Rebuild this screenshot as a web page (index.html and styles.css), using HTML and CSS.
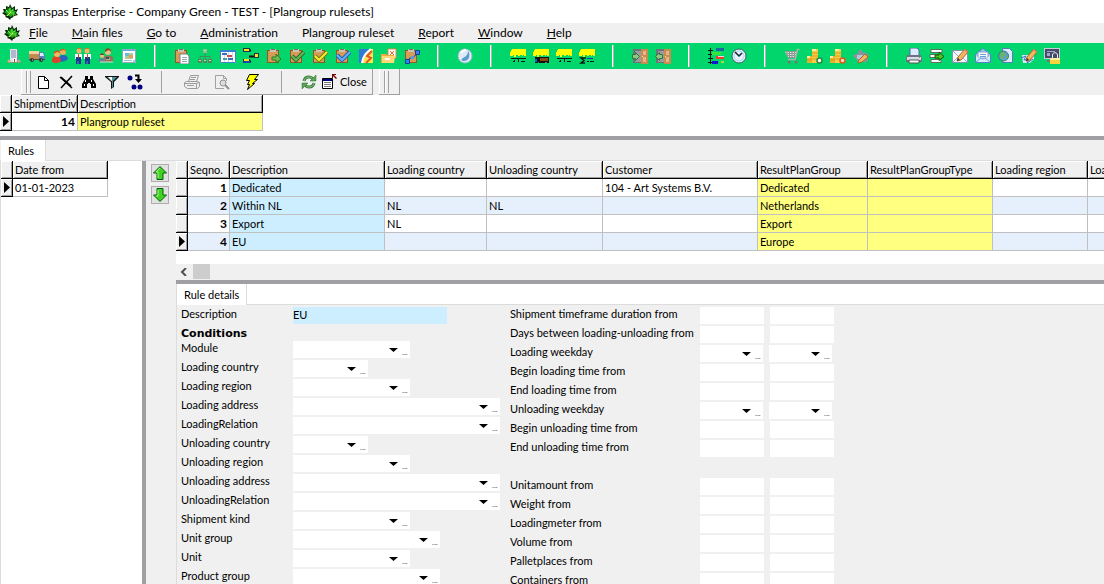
FILE: index.html
```html
<!DOCTYPE html>
<html lang="en">
<head>
    <meta charset="UTF-8">
    <meta name="viewport" content="width=device-width, initial-scale=1.0">
    <title>Transpas Enterprise - Plangroup rulesets</title>
    <link rel="stylesheet" href="styles.css">
</head>
<body>

    <!-- Icon shapes -->
    <svg class="sprite" aria-hidden="true">
        <symbol id="leaf" viewBox="0 0 16 16">
            <path d="M8 0l2 4 3-2v4l3-1-2 4 2 2-4 1-2 2H9l-1 2-2-2-3-1 1-1-4-3 2-1-1-3h3L4 2l3 1z" fill="#062a06"/>
            <path d="M8 2l1 4 3-2v3l2 0-1 2 1 2-3 0-2 2-2-1-3 0 1-2-3-2 2-1-1-2 3 1-1-3 2 2z" fill="#1fa81f"/>
            <path d="M8 4v4l3-2M4 6l3 3 5 0" stroke="#6af046" fill="none"/>
            <path d="M5 12l3-3 1-1M11 11h1" stroke="#e2e83a" fill="none"/>
        </symbol>
        <symbol id="building" viewBox="0 0 16 16">
            <path d="M1 14h14v1H1z" fill="#7c9a62"/><path d="M4 1h7v13H4z" fill="#dfe2ea"/><path d="M11 2h1v12h-1z" fill="#8890a8"/>
            <path d="M5 3h5M5 5h5M5 7h5M5 9h5" stroke="#7d90b4"/>
            <path d="M7 10h3v4H7z" fill="#fff"/><path d="M8 11h1v3H8z" fill="#99463a"/><circle cx="3" cy="13" r="1.500" fill="#c8b48e"/><circle cx="13" cy="13" r="1.500" fill="#c8a48e"/>
        </symbol>
        <symbol id="truck" viewBox="0 0 16 16">
            <path d="M0 3h10v8H0z" fill="#c08a50"/><path d="M0 3h10v3H0z" fill="#f0d29a"/><path d="M10 4h4l2 4v4h-6z" fill="#5b83bb"/><path d="M11 5h3l1 3h-4z" fill="#dcecff"/>
            <path d="M0 11h16v1H0z" fill="#4a4a52"/><circle cx="3" cy="12" r="2" fill="#333"/><circle cx="12" cy="12" r="2" fill="#333"/><path d="M3 12h1M12 12h1" stroke="#ccc"/>
        </symbol>
        <symbol id="people" viewBox="0 0 16 16">
            <path d="M7 14c0-5 1-7 4-7s5 2 5 4c-2 2-5 3-9 3z" fill="#2a62c4"/><circle cx="11" cy="4" r="3" fill="#f0b060"/><path d="M8 3c0-3 6-3 6 1l-2-2z" fill="#c06820"/>
            <path d="M0 14c0-4 1-6 4-6s5 2 5 5c-2 2-6 3-9 1z" fill="#e04428"/><circle cx="5" cy="6" r="3" fill="#f7b868"/><path d="M2 6c-1-4 6-5 6-1L5 4z" fill="#d8501c"/>
        </symbol>
        <symbol id="pair" viewBox="0 0 16 16">
            <circle cx="4" cy="3" r="2.500" fill="#f3b36a"/><circle cx="12" cy="3" r="2.500" fill="#f3b36a"/><path d="M2 0h4v1H2zM10 0h4v1h-4z" fill="#e0702c"/>
            <path d="M0 6h7v5H0zM9 6h7v5H9z" fill="#fff"/><path d="M1 9h5v7H1zM10 9h5v7h-5z" fill="#183a8c"/><path d="M3.500 6v4M12.500 6v4" stroke="#e03a2a"/><path d="M3 13v3M12 13v3" stroke="#5c88d8"/>
        </symbol>
        <symbol id="family" viewBox="0 0 16 16">
            <circle cx="10" cy="4" r="3" fill="#f0bd84"/><path d="M7 4c-1-5 7-5 6 0l-2-2z" fill="#8b4a20"/><path d="M6 14V9c1-2 7-2 9 0v5z" fill="#96744f"/>
            <circle cx="4" cy="8" r="2" fill="#f0bd84"/><path d="M2 7c0-2 4-2 4 0z" fill="#7a3d1c"/><path d="M1 14v-3c1-1 5-1 6 0v3z" fill="#6c8194"/><path d="M8 11h4M2 14h13" stroke="#ddd"/><path d="M8 9h3v2H8z" fill="#334e76"/>
        </symbol>
        <symbol id="calendar" viewBox="0 0 16 16">
            <path d="M1 1h14v14H1z" fill="#fff"/><path d="M1 1h14v2H1z" fill="#6ca4e4"/><path d="M1.500 1.500h13v13h-13z" fill="none" stroke="#8aa7c6"/>
            <path d="M4 5h8v6H4z" fill="#a9cf9d"/><path d="M4 5h4v3H4z" fill="#6cb8d8"/><path d="M8 7h4v3H8z" fill="#ef9a52"/><path d="M3 12.500h8" stroke="#9fb8d4"/><path d="M12 12h2v2h-2z" fill="#b8c4d0"/>
        </symbol>
        <symbol id="clip" viewBox="0 0 16 16">
            <path d="M1 2h12v13H1z" fill="#8c5a24"/><path d="M2 3h10v11H2z" fill="#d79b56"/><path d="M4 1h6v3H4z" fill="#c8c4b8"/><path d="M5 1h4v1H5z" fill="#77705f"/>
        </symbol>
        <symbol id="clip-page" viewBox="0 0 16 16">
            <use href="#clip"/><path d="M6 6h7l2 2v8H6z" fill="#fff" stroke="#7a7f8c"/><path d="M8 9.500h5M8 11.500h5M8 13.500h5" stroke="#9aa4b4"/>
        </symbol>
        <symbol id="tree" viewBox="0 0 16 16">
            <path d="M8 5v4M3 12V8.500h10V12M8 9v3" fill="none" stroke="#4a8a58"/><path d="M6 1h4v4H6z" fill="#8ec08e"/><path d="M1 11h4v4H1zM6 11h4v4H6zM11 11h4v4h-4z" fill="#508a5c"/><path d="M7 2h2v1H7zM2 12h2v1H2zM7 12h2v1H7zM12 12h2v1h-2z" fill="#b9dfb8"/>
        </symbol>
        <symbol id="gantt" viewBox="0 0 16 16">
            <path d="M0 2h16v13H0z" fill="#fff"/><path d="M0 2h16v2H0z" fill="#2e7ed2"/><path d="M.5 2.500h15v12H.5z" fill="none" stroke="#3f82c8"/><path d="M4.500 4v10M8.500 4v10M12.500 4v10" stroke="#cbdcec"/>
            <path d="M2 5h5v2H2zM8 10h5v2H8z" fill="#3d6bb8"/><path d="M7 7h5v2H7z" fill="#d14b4b"/><path d="M3 10h4v2H3z" fill="#46a0a0"/>
        </symbol>
        <symbol id="links" viewBox="0 0 16 16">
            <path d="M7 2.500h1M7 13.500h1M6 8.500h5" fill="none" stroke="#111" stroke-width="2"/><path d="M0 0h7v4H0zM0 11h7v4H0zM11 5h5v5h-5z" fill="#26324c"/><path d="M1 1h5v2H1zM12 6h3v3h-3z" fill="#ffe21a"/><path d="M1 11h5v2H1z" fill="#ffe21a"/><path d="M1 13h6v2H1z" fill="#1846b4"/>
        </symbol>
        <symbol id="clip-go" viewBox="0 0 16 16">
            <use href="#clip"/><path d="M6 9h4V6l5 5-5 4v-3H6z" fill="#6dbb4d" stroke="#2b7a2b"/>
        </symbol>
        <symbol id="clip-green" viewBox="0 0 16 16">
            <use href="#clip"/><path d="M3 8l4 4 8-8" fill="none" stroke="#226b2a" stroke-width="4"/><path d="M3 8l4 4 8-8" fill="none" stroke="#63b857" stroke-width="2"/>
        </symbol>
        <symbol id="clip-yellow" viewBox="0 0 16 16">
            <use href="#clip"/><path d="M3 8l4 4 8-8" fill="none" stroke="#6d7a12" stroke-width="4"/><path d="M3 8l4 4 8-8" fill="none" stroke="#f5ee2a" stroke-width="2"/>
        </symbol>
        <symbol id="clip-blue" viewBox="0 0 16 16">
            <use href="#clip"/><path d="M2 7l5 5 8-8" fill="none" stroke="#2161b8" stroke-width="4"/><path d="M2 7l5 5 8-8" fill="none" stroke="#62b0f5" stroke-width="2"/>
        </symbol>
        <symbol id="map" viewBox="0 0 16 16">
            <path d="M1 1h14v14H1z" fill="#ffe44c"/><path d="M1 1h11C6 4 8 11 3 15H1z" fill="#2f79d8"/><path d="M4 15C5 8 8 5 13 1" fill="none" stroke="#fff" stroke-width="2"/><path d="M14 3l-5 5 4 2-5 5" fill="none" stroke="#e2572a" stroke-width="2"/>
        </symbol>
        <symbol id="folder" viewBox="0 0 16 16">
            <path d="M7 1h8v9H7z" fill="#fff" stroke="#e8854a"/><path d="M9 3l4 4M13 3L9 7" stroke="#ea6a2a"/><path d="M0 6h5l1 1h7v8H0z" fill="#f1a93b"/><path d="M1 8h13l-1 7H1z" fill="#ffd877"/><path d="M4 10h5v2H4z" fill="#fff"/>
        </symbol>
        <symbol id="clip-nodes" viewBox="0 0 16 16">
            <use href="#clip"/><path d="M4 13c0-5 7-1 9-9" fill="none" stroke="#143b8c"/><path d="M1.500 11.500h4v4h-4zM11.500 2.500h4v4h-4z" fill="#2f86f0" stroke="#123f96"/><path d="M7 8h3v3H7z" fill="#4f9bf4"/>
        </symbol>
        <symbol id="globe" viewBox="0 0 16 16">
            <circle cx="8" cy="8" r="7" fill="#dcebf4" stroke="#9bb9cf"/><path d="M11 3c3 4 1 10-4 10-3 0-3-2-1-3s5-3 5-7z" fill="#5b9bd0"/><path d="M4 5c1-2 3-3 5-3" stroke="#fff" stroke-width="2" fill="none"/>
        </symbol>
        <symbol id="trailer" viewBox="0 0 16 16">
            <path d="M2 1h14v7h-2V7h-1v1h-1V7h-2v1H8V7H6v2H4V7H3v1H0V4h1V2h1z" fill="#ffff00"/>
        </symbol>
        <symbol id="trailer-a" viewBox="0 0 16 16">
            <use href="#trailer"/><path d="M1 10h15v1H1zM4 12h1v2H4zM8 11h1v3H8zM3 13h2v1H3zM11 13h4v1h-4z" fill="#041c0e"/>
        </symbol>
        <symbol id="trailer-b" viewBox="0 0 16 16">
            <use href="#trailer"/><path d="M2 9h14v6H2z" fill="#111"/><path d="M7 10h8v3H7z" fill="#8b4a0e"/><path d="M2 11h2v3H2z" fill="#1860c8"/><path d="M5 14h1v1H5zM12 14h2v1h-2z" fill="#777"/>
        </symbol>
        <symbol id="trailer-c" viewBox="0 0 16 16">
            <use href="#trailer"/><path d="M7 10H2l3 2.500L2 15h4" fill="none" stroke="#041c0e" stroke-width="1.500"/><path d="M8 10h6v1H8z" fill="#0a38b0"/><path d="M8 13h2v1H8zM11 13h4v1h-4z" fill="#041c0e"/>
        </symbol>
        <symbol id="door" viewBox="0 0 16 16">
            <path d="M1 1h14v14H1z" fill="#6e7278"/><path d="M3 3h6v11H3z" fill="#999da0"/><path d="M9 1h7v15H9z" fill="#c98b50"/><path d="M11 3h3v4h-3zM11 9h3v5h-3z" fill="#e6b784"/><path d="M10 8h1v1h-1z" fill="#ffe98c"/>
        </symbol>
        <symbol id="door-in" viewBox="0 0 16 16">
            <use href="#door"/><path d="M.5 6.500h3v-2l4 4-4 4v-2h-3z" fill="#8cc87c" stroke="#387044"/>
        </symbol>
        <symbol id="door-out" viewBox="0 0 16 16">
            <use href="#door"/><path d="M7.500 6.500h-3v-2l-4 4 4 4v-2h3z" fill="#8cc87c" stroke="#387044"/>
        </symbol>
        <symbol id="bars" viewBox="0 0 16 16">
            <path d="M2 0h1v16H2zM0 2h5v1H0zM0 6h5v1H0zM0 10h5v1H0zM0 14h5v1H0z" fill="#081c10"/><path d="M8 0h8v3H8z" fill="#166a9c"/><path d="M4 4h9v3H4z" fill="#36e43c"/><path d="M8 8h8v3H8z" fill="#f43a34"/><path d="M10 8h6v1h-6z" fill="#ffd5d0"/><path d="M4 13h6v3H4z" fill="#1018d0"/><path d="M13 13h3v2h-3z" fill="#a4e02e"/>
        </symbol>
        <symbol id="clock" viewBox="0 0 16 16">
            <circle cx="8" cy="8" r="7" fill="#e7f4fb" stroke="#46606e"/><circle cx="8" cy="8" r="5" fill="none" stroke="#a5d6f2"/><path d="M4 4l4 4 3-3" stroke="#10242e" stroke-width="1.500" fill="none"/>
        </symbol>
        <symbol id="cart" viewBox="0 0 16 16">
            <path d="M1 4h12l-2 5H4z" fill="#e0e4e0"/><path d="M1 3.500h11.500M2 5.500h10M3 7.500h9M4 9.500h7M3 3v6M5.500 4v6M8 4v6M10.500 4v5" stroke="#8b9690" fill="none"/><path d="M15.500 1.500h-2L11 11.500H4" stroke="#b0b4b0" stroke-width="1.500" fill="none"/><circle cx="5" cy="14" r="1.500" fill="#777"/><circle cx="12" cy="14" r="1.500" fill="#777"/>
        </symbol>
        <symbol id="coins" viewBox="0 0 16 16">
            <path d="M0 8h5v7H0z" fill="#e6b42c"/><path d="M5 1h6v14H5z" fill="#f6cd46"/><path d="M5 1h4v2H5zM0 8h3v2H0z" fill="#fff0a0"/><path d="M5 5h6M5 8h6M5 11h6M0 12h5" stroke="#d49a1c"/>
        </symbol>
        <symbol id="coins-add" viewBox="0 0 16 16">
            <use href="#coins"/><circle cx="12.500" cy="12.500" r="2.500" fill="#fff" stroke="#2c8a3a" stroke-width="1.500"/>
        </symbol>
        <symbol id="coins-del" viewBox="0 0 16 16">
            <use href="#coins"/><circle cx="12.500" cy="12.500" r="2.500" fill="#ffd8b8" stroke="#e05a1c" stroke-width="1.500"/>
        </symbol>
        <symbol id="pencil" viewBox="0 0 16 16">
            <path d="M5 13l1-4 7-8 3 3-7 8z" fill="#f4b661" stroke="#a86a2a"/><path d="M5 13l1-3 2 2z" fill="#333"/><path d="M12 2l1-1 3 3-1 1z" fill="#e58a6a"/>
        </symbol>
        <symbol id="edit-gear" viewBox="0 0 16 16">
            <path d="M6 2h3v2l4 1 3 2-1 2-1 5H5l-2-3-3-3V7l4-1z" fill="#8795a0"/><path d="M4 7h6v4H4z" fill="#b9c7d0"/><path d="M5 15l1-3 6-6 3 3-6 5z" fill="#f4b661" stroke="#a86a2a"/>
        </symbol>
        <symbol id="printer" viewBox="0 0 16 16">
            <path d="M4 0h7l2 2v6H4z" fill="#dcebff" stroke="#4d6c9c"/><path d="M1 7h14l1 3v4H0v-4z" fill="#6d7384"/><path d="M1 9h14v3H1z" fill="#d8dce4"/><path d="M3 12h10v3H3z" fill="#fff" stroke="#555"/><path d="M13 9h1v1h-1z" fill="#3cc43c"/>
        </symbol>
        <symbol id="export" viewBox="0 0 16 16">
            <path d="M2 1.500h11v3H2zM1 6.500h11v3H1zM2 11.500h10v3H2z" fill="#fff" stroke="#57705e"/><path d="M6 7h4V4l5 4.500-5 4V10H6z" fill="#49c51c" stroke="#17510f"/>
        </symbol>
        <symbol id="mail-edit" viewBox="0 0 16 16">
            <path d="M.5 2.500h15v12H.5z" fill="#f4f8ff" stroke="#7d94b8"/><path d="M1 3l6 6 8-6M1 14l5-5M15 14l-5-5" stroke="#93abcc" fill="none"/><use href="#pencil"/>
        </symbol>
        <symbol id="mail-open" viewBox="0 0 16 16">
            <path d="M.5 6.500L8 .5l7.500 6v8H.5z" fill="#a4ccf4" stroke="#4d84c8"/><path d="M3 4h10v6H3z" fill="#fff" stroke="#7e9cc6"/><path d="M5 6.500h6M5 8.500h6" stroke="#65a0dc"/><path d="M1 8l7 4 7-4v6H1z" fill="#d9ebff"/><path d="M1 14l5-4M15 14l-5-4" stroke="#6d9fd6"/>
        </symbol>
        <symbol id="web-page" viewBox="0 0 16 16">
            <path d="M4.500.5h7l3 3v11h-10z" fill="#dcebff" stroke="#4f7dbc"/><circle cx="5.500" cy="8" r="5" fill="#5f9fce" stroke="#3a7a72"/><path d="M2 5l4-1 2 3-3 2 1 3-3-2zM8 8l2 1-2 2z" fill="#68b85a"/>
        </symbol>
        <symbol id="sign" viewBox="0 0 16 16">
            <path d="M1 7h12v4l-4 4H2z" fill="#d8e8fb"/><path d="M0 10l5-2-2 4 5-1-2 4 6-4" fill="none" stroke="#3f78bd"/><use href="#pencil"/>
        </symbol>
        <symbol id="lock-screen" viewBox="0 0 16 16">
            <path d="M0 0h16v11H0z" fill="#c9ccd6"/><path d="M1 1h14v9H1z" fill="#454a68"/><path d="M3 3h8v1H3zM3 5h3v3H3z" fill="#a0a8c8"/><path d="M3 12h4v2H3z" fill="#737784"/><path d="M8.500 11V7c0-3 5-3 5 0v4" fill="none" stroke="#eee"/><path d="M6 10h10v6H6z" fill="#f8d43c"/><path d="M6 10h10v2H6z" fill="#fff0a0"/>
        </symbol>
        <symbol id="new" viewBox="0 0 16 16">
            <path d="M3.500 2.500h6l4 4v8h-10z" fill="#fff" stroke="#000"/><path d="M9.500 2.500v4h4" fill="none" stroke="#000"/>
        </symbol>
        <symbol id="delete" viewBox="0 0 16 16">
            <path d="M2 3l12 11M14 2L3 14M3 3l10 9" stroke="#000" stroke-width="1.500" fill="none"/>
        </symbol>
        <symbol id="find" viewBox="0 0 16 16">
            <path d="M4 2h3v3h2V2h3v3l3 5v4h-5v-4H9V9H7v1H6v4H1v-4l3-5z" fill="#000"/><path d="M4.500 6v2M3.500 10v2M10.500 6v2M12.500 10v2" stroke="#fff"/>
        </symbol>
        <symbol id="filter" viewBox="0 0 16 16">
            <path d="M1 2h14v1l-5 5v5l-3 2V8L1 3z" fill="#111"/><path d="M3 3h10l-4 4v6l-1 1V7H7z" fill="#4d9494"/><path d="M4 3h4v4z" fill="#fff"/>
        </symbol>
        <symbol id="goto" viewBox="0 0 16 16">
            <circle cx="3" cy="4" r="2.500" fill="#000080"/><circle cx="7" cy="13" r="2.500" fill="#000080"/><circle cx="13" cy="13" r="2.500" fill="#000080"/><path d="M8 1.500h3.500V6" fill="none" stroke="#000" stroke-width="2"/><path d="M8 5h7l-3.500 4z" fill="#000"/>
        </symbol>
        <symbol id="print-off" viewBox="0 0 16 16">
            <path d="M4.500 7.500l2-6h8l-2 6M7 3.500h5M6 5.500h5M.5 8.500l2-1h11l2 1v4l-2 2h-10l-3-2zM1 9.500h11l3-1M12.500 9.500v5M3 11.500h7" fill="none" stroke="#9b9b9b"/>
        </symbol>
        <symbol id="preview-off" viewBox="0 0 16 16">
            <path d="M10 14.500H1.500v-13h8l3 3V7M9.500 1.500v3h3" fill="none" stroke="#a0a0a0"/><circle cx="9" cy="9" r="3" fill="#ddd" stroke="#909090"/><path d="M11 11l4 4" stroke="#909090" stroke-width="2"/>
        </symbol>
        <symbol id="bolt" viewBox="0 0 16 16">
            <path d="M5.500.5h9l-4 5h3l-5 4h2l-7 6 2-5h-2l2-4h-3z" fill="#ffff00" stroke="#000"/>
        </symbol>
        <symbol id="refresh" viewBox="0 0 16 16">
            <path d="M3 7c1-5 7-5 9-2M13 9c-1 5-7 5-9 2" fill="none" stroke="#3c7f40" stroke-width="3"/><path d="M3 7c1-5 7-5 9-2M13 9c-1 5-7 5-9 2" fill="none" stroke="#8bcb7c"/><path d="M9 7h6V1zM7 9H1v6z" fill="#5aa653" stroke="#2f6e36" stroke-width=".5"/>
        </symbol>
        <symbol id="close-form" viewBox="0 0 16 16">
            <path d="M1.500 4.500h10v10h-10z" fill="#fff" stroke="#000"/><path d="M2 5h9v2H2z" fill="#000080"/><path d="M3 8.500h7M3 10.500h7M3 12.500h7" stroke="#777"/><path d="M11 0h4v1h-2l3 3-1 1-3-3v2h-1z" fill="#800000"/>
        </symbol>
        <symbol id="arrow-up" viewBox="0 0 16 16">
            <path d="M8 1.500L14.500 8H11v6.500H5V8H1.500z" fill="#3cd41c" stroke="#0a5a14"/><path d="M8 3L4 7h2v6" fill="none" stroke="#a8f58a"/>
        </symbol>
        <symbol id="arrow-down" viewBox="0 0 16 16">
            <path d="M8 14.500L14.500 8H11V1.500H5V8H1.500z" fill="#3cd41c" stroke="#0a5a14"/><path d="M4 9h2V3" fill="none" stroke="#a8f58a"/>
        </symbol>
    </svg>

    <header class="titlebar">
        <svg class="icon"><use href="#leaf"/></svg>
        <span>Transpas Enterprise - Company Green - TEST - [Plangroup rulesets]</span>
    </header>

    <nav class="menubar">
        <svg class="icon"><use href="#leaf"/></svg>
        <a href="#"><u>F</u>ile</a>
        <a href="#"><u>M</u>ain files</a>
        <a href="#"><u>G</u>o to</a>
        <a href="#"><u>A</u>dministration</a>
        <a href="#">Plangroup ruleset</a>
        <a href="#"><u>R</u>eport</a>
        <a href="#"><u>W</u>indow</a>
        <a href="#"><u>H</u>elp</a>
    </nav>

    <div class="mainbar">
        <button aria-label="Company"><svg class="icon"><use href="#building"/></svg></button>
        <button aria-label="Trucks"><svg class="icon"><use href="#truck"/></svg></button>
        <button aria-label="Relations"><svg class="icon"><use href="#people"/></svg></button>
        <button aria-label="Drivers"><svg class="icon"><use href="#pair"/></svg></button>
        <button aria-label="Employees"><svg class="icon"><use href="#family"/></svg></button>
        <button aria-label="Calendar"><svg class="icon"><use href="#calendar"/></svg></button>
        <span class="sep"></span>
        <button aria-label="Orders"><svg class="icon"><use href="#clip-page"/></svg></button>
        <button aria-label="Structure"><svg class="icon"><use href="#tree"/></svg></button>
        <button aria-label="Planboard"><svg class="icon"><use href="#gantt"/></svg></button>
        <button aria-label="Combine"><svg class="icon"><use href="#links"/></svg></button>
        <button aria-label="Send order"><svg class="icon"><use href="#clip-go"/></svg></button>
        <button aria-label="Approve"><svg class="icon"><use href="#clip-green"/></svg></button>
        <button aria-label="Check"><svg class="icon"><use href="#clip-yellow"/></svg></button>
        <button aria-label="Complete"><svg class="icon"><use href="#clip-blue"/></svg></button>
        <button aria-label="Map"><svg class="icon"><use href="#map"/></svg></button>
        <button aria-label="Documents"><svg class="icon"><use href="#folder"/></svg></button>
        <button aria-label="Route"><svg class="icon"><use href="#clip-nodes"/></svg></button>
        <span class="sep"></span>
        <button aria-label="Web"><svg class="icon"><use href="#globe"/></svg></button>
        <span class="sep"></span>
        <button aria-label="Trailers"><svg class="icon"><use href="#trailer-a"/></svg></button>
        <button aria-label="Loaded trailers"><svg class="icon"><use href="#trailer-b"/></svg></button>
        <button aria-label="Empty trailers"><svg class="icon"><use href="#trailer-a"/></svg></button>
        <button aria-label="Trailer totals"><svg class="icon"><use href="#trailer-c"/></svg></button>
        <span class="sep"></span>
        <button aria-label="Check in"><svg class="icon"><use href="#door-in"/></svg></button>
        <button aria-label="Check out"><svg class="icon"><use href="#door-out"/></svg></button>
        <span class="sep"></span>
        <button aria-label="Timeline"><svg class="icon"><use href="#bars"/></svg></button>
        <button aria-label="Hours"><svg class="icon"><use href="#clock"/></svg></button>
        <span class="sep"></span>
        <button aria-label="Purchase"><svg class="icon"><use href="#cart"/></svg></button>
        <button aria-label="Add cost"><svg class="icon"><use href="#coins-add"/></svg></button>
        <button aria-label="Remove cost"><svg class="icon"><use href="#coins-del"/></svg></button>
        <button aria-label="Edit settings"><svg class="icon"><use href="#edit-gear"/></svg></button>
        <span class="sep"></span>
        <button aria-label="Print"><svg class="icon"><use href="#printer"/></svg></button>
        <button aria-label="Export"><svg class="icon"><use href="#export"/></svg></button>
        <button aria-label="Write mail"><svg class="icon"><use href="#mail-edit"/></svg></button>
        <button aria-label="Mail"><svg class="icon"><use href="#mail-open"/></svg></button>
        <button aria-label="Web page"><svg class="icon"><use href="#web-page"/></svg></button>
        <button aria-label="Sign"><svg class="icon"><use href="#sign"/></svg></button>
        <button aria-label="Lock screen"><svg class="icon"><use href="#lock-screen"/></svg></button>
    </div>

    <div class="subbar">
        <div class="band">
            <span class="grip"></span>
            <div class="tools">
                <button aria-label="New"><svg class="icon"><use href="#new"/></svg></button>
                <button aria-label="Delete"><svg class="icon"><use href="#delete"/></svg></button>
                <button aria-label="Find"><svg class="icon"><use href="#find"/></svg></button>
                <button aria-label="Filter"><svg class="icon"><use href="#filter"/></svg></button>
                <button aria-label="Go to record"><svg class="icon"><use href="#goto"/></svg></button>
            </div>
            <span class="line"></span>
            <div class="tools wide">
                <button aria-label="Print list" disabled><svg class="icon"><use href="#print-off"/></svg></button>
                <button aria-label="Preview" disabled><svg class="icon"><use href="#preview-off"/></svg></button>
                <button aria-label="Actions"><svg class="icon"><use href="#bolt"/></svg></button>
            </div>
            <span class="line"></span>
            <div class="tools tight">
                <button aria-label="Refresh"><svg class="icon"><use href="#refresh"/></svg></button>
                <button class="close"><svg class="icon"><use href="#close-form"/></svg>Close</button>
            </div>
        </div>
        <div class="band small"><span class="grip"></span></div>
    </div>

    <section class="rulesets">
        <table class="grid">
            <colgroup><col class="w-mark"><col class="w-div"><col class="w-desc"></colgroup>
            <thead><tr><th></th><th>ShipmentDivi</th><th>Description</th></tr></thead>
            <tbody><tr><td class="mark current"></td><td class="num">14</td><td class="yellow">Plangroup ruleset</td></tr></tbody>
        </table>
    </section>

    <div class="tabs main-tabs"><button class="tab">Rules</button></div>

    <main class="workspace">
        <aside class="dates">
            <table class="grid">
                <colgroup><col class="w-mark"><col class="w-date"></colgroup>
                <thead><tr><th></th><th>Date from</th></tr></thead>
                <tbody><tr><td class="mark current"></td><td>01-01-2023</td></tr></tbody>
            </table>
        </aside>

        <div class="mover">
            <button aria-label="Move up"><svg class="icon"><use href="#arrow-up"/></svg></button>
            <button aria-label="Move down"><svg class="icon"><use href="#arrow-down"/></svg></button>
        </div>

        <div class="right">
            <div class="rules">
                <table class="grid">
                    <colgroup>
                        <col class="w-mark"><col class="w-seq"><col class="w-name"><col class="w-load"><col class="w-unload">
                        <col class="w-name"><col class="w-plan"><col class="w-type"><col class="w-date"><col class="w-load">
                    </colgroup>
                    <thead>
                        <tr><th></th><th>Seqno.</th><th>Description</th><th>Loading country</th><th>Unloading country</th><th>Customer</th><th>ResultPlanGroup</th><th>ResultPlanGroupType</th><th>Loading region</th><th>Loading address</th></tr>
                    </thead>
                    <tbody>
                        <tr><td class="mark"></td><td class="num">1</td><td class="blue">Dedicated</td><td></td><td></td><td>104 - Art Systems B.V.</td><td class="yellow">Dedicated</td><td class="yellow"></td><td></td><td></td></tr>
                        <tr><td class="mark"></td><td class="num">2</td><td class="blue">Within NL</td><td>NL</td><td>NL</td><td></td><td class="yellow">Netherlands</td><td class="yellow"></td><td></td><td></td></tr>
                        <tr><td class="mark"></td><td class="num">3</td><td class="blue">Export</td><td>NL</td><td></td><td></td><td class="yellow">Export</td><td class="yellow"></td><td></td><td></td></tr>
                        <tr><td class="mark current"></td><td class="num">4</td><td class="blue">EU</td><td></td><td></td><td></td><td class="yellow">Europe</td><td class="yellow"></td><td></td><td></td></tr>
                    </tbody>
                </table>
            </div>
            <div class="scrollbar">
                <button aria-label="Scroll left"><svg viewBox="0 0 8 8"><path d="M6 0L2 4l4 4" fill="none" stroke="#505050" stroke-width="2"/></svg></button>
                <span class="thumb"></span>
            </div>

            <div class="tabs detail-tabs"><button class="tab">Rule details</button></div>

            <form class="details">
                <div class="conditions">
                    <label for="description">Description</label>
                    <input class="name" id="description" type="text" value="EU">
                    <h2>Conditions</h2>
                    <label for="module">Module</label>
                    <div class="combo medium"><select id="module"></select><button type="button">...</button></div>
                    <label for="loadcountry">Loading country</label>
                    <div class="combo short"><select id="loadcountry"></select><button type="button">...</button></div>
                    <label for="loadregion">Loading region</label>
                    <div class="combo medium"><select id="loadregion"></select><button type="button">...</button></div>
                    <label for="loadaddress">Loading address</label>
                    <div class="combo long"><select id="loadaddress"></select><button type="button">...</button></div>
                    <label for="loadrelation">LoadingRelation</label>
                    <div class="combo long"><select id="loadrelation"></select><button type="button">...</button></div>
                    <label for="unloadcountry">Unloading country</label>
                    <div class="combo short"><select id="unloadcountry"></select><button type="button">...</button></div>
                    <label for="unloadregion">Unloading region</label>
                    <div class="combo medium"><select id="unloadregion"></select><button type="button">...</button></div>
                    <label for="unloadaddress">Unloading address</label>
                    <div class="combo long"><select id="unloadaddress"></select><button type="button">...</button></div>
                    <label for="unloadrelation">UnloadingRelation</label>
                    <div class="combo long"><select id="unloadrelation"></select><button type="button">...</button></div>
                    <label for="kind">Shipment kind</label>
                    <div class="combo medium"><select id="kind"></select><button type="button">...</button></div>
                    <label for="unitgroup">Unit group</label>
                    <div class="combo group"><select id="unitgroup"></select><button type="button">...</button></div>
                    <label for="unit">Unit</label>
                    <div class="combo medium"><select id="unit"></select><button type="button">...</button></div>
                    <label for="productgroup">Product group</label>
                    <div class="combo group"><select id="productgroup"></select><button type="button">...</button></div>
                </div>

                <div class="ranges">
                    <label for="duration">Shipment timeframe duration from</label>
                    <input id="duration" type="text"><input type="text" aria-label="Duration to">
                    <label for="days">Days between loading-unloading from</label>
                    <input id="days" type="text"><input type="text" aria-label="Days to">
                    <label for="loadday">Loading weekday</label>
                    <div class="combo"><select id="loadday"></select><button type="button">...</button></div>
                    <div class="combo"><select aria-label="Loading weekday to"></select><button type="button">...</button></div>
                    <label for="beginload">Begin loading time from</label>
                    <input id="beginload" type="text"><input type="text" aria-label="Begin loading time to">
                    <label for="endload">End loading time from</label>
                    <input id="endload" type="text"><input type="text" aria-label="End loading time to">
                    <label for="unloadday">Unloading weekday</label>
                    <div class="combo"><select id="unloadday"></select><button type="button">...</button></div>
                    <div class="combo"><select aria-label="Unloading weekday to"></select><button type="button">...</button></div>
                    <label for="beginunload">Begin unloading time from</label>
                    <input id="beginunload" type="text"><input type="text" aria-label="Begin unloading time to">
                    <label for="endunload">End unloading time from</label>
                    <input id="endunload" type="text"><input type="text" aria-label="End unloading time to">
                    <div class="blank"></div>
                    <label for="amount">Unitamount from</label>
                    <input id="amount" type="text"><input type="text" aria-label="Unitamount to">
                    <label for="weight">Weight from</label>
                    <input id="weight" type="text"><input type="text" aria-label="Weight to">
                    <label for="loadmeter">Loadingmeter from</label>
                    <input id="loadmeter" type="text"><input type="text" aria-label="Loadingmeter to">
                    <label for="volume">Volume from</label>
                    <input id="volume" type="text"><input type="text" aria-label="Volume to">
                    <label for="pallets">Palletplaces from</label>
                    <input id="pallets" type="text"><input type="text" aria-label="Palletplaces to">
                    <label for="containers">Containers from</label>
                    <input id="containers" type="text"><input type="text" aria-label="Containers to">
                </div>
            </form>
        </div>
    </main>
</body>
</html>
```
FILE: styles.css
```css
* {
    box-sizing: border-box;
}

body {
    margin: 0;
    height: 100vh;
    overflow: hidden;
    display: flex;
    flex-direction: column;
    background: #f0f0f0;
    color: #000;
    font-family: Lato, "Liberation Sans", sans-serif;
    font-size: 11px;
    line-height: 14px;
}

button, input, select {
    font: inherit;
    color: inherit;
    border: none;
    border-radius: 0;
    padding: 0;
    margin: 0;
    background: none;
}

.sprite {
    display: none;
}

.icon {
    width: 16px;
    height: 16px;
    flex: none;
    display: block;
}

/* Title and menu */
.titlebar, .menubar {
    display: flex;
    align-items: center;
    font-size: 12px;
    line-height: 16px;
    white-space: nowrap;
    flex: none;
}

.titlebar {
    height: 23px;
    padding-left: 2px;
    gap: 5px;
    background: #fff;
}

.menubar {
    height: 20px;
    padding-left: 4px;
    gap: 24px;
}

.menubar .icon {
    margin-right: -15px;
}

.menubar a {
    color: #000;
    text-decoration: none;
}

/* Green toolbar */
.mainbar {
    display: flex;
    align-items: center;
    height: 26px;
    padding-left: 3px;
    background: #00d66b;
    flex: none;
}

.mainbar button {
    width: 23px;
    padding-left: 3px;
    flex: none;
}

.sep {
    width: 2px;
    height: 22px;
    margin: 0 15px 0 13px;
    background: #fff;
    border-right: 1px solid #b4b4b4;
    flex: none;
}

/* Grid toolbar */
.subbar {
    display: flex;
    height: 26px;
    padding-left: 21px;
    gap: 6px;
    flex: none;
}

.band {
    display: flex;
    align-items: center;
    border: 1px solid #a0a0a0;
    border-width: 0 1px 1px 0;
    box-shadow: inset 1px 0 #fff;
    padding: 0 5px;
}

.band.small {
    width: 21px;
}

.grip {
    width: 5px;
    height: 22px;
    border: 1px solid #a0a0a0;
    border-width: 0 1px;
    box-shadow: inset 1px 0 #fff;
}

.tools {
    display: flex;
    gap: 7px;
    margin-left: 4px;
}

.tools.wide {
    gap: 14px;
    margin-left: 22px;
}

.tools.tight {
    gap: 4px;
    margin-left: 19px;
}

.line {
    width: 1px;
    height: 22px;
    margin-left: 18px;
    background: #a0a0a0;
}

.wide + .line {
    margin-left: 21px;
}

.close {
    display: flex;
    align-items: center;
    gap: 3px;
}

/* Data grids */
.rulesets {
    height: 45px;
    background: #fff;
    border-bottom: 4px solid #a0a0a4;
    flex: none;
}

.grid {
    table-layout: fixed;
    width: 0;
    border-collapse: separate;
    border-spacing: 0;
}

.w-mark { width: 12px; }
.w-div { width: 66px; }
.w-desc { width: 185px; }
.w-date { width: 95px; }
.w-seq { width: 42px; }
.w-name { width: 155px; }
.w-load { width: 102px; }
.w-unload { width: 116px; }
.w-plan { width: 110px; }
.w-type { width: 125px; }

.grid th, .grid td {
    height: 18px;
    padding: 0 0 0 2px;
    line-height: 17px;
    white-space: nowrap;
    overflow: hidden;
    text-align: left;
}

.grid th {
    font-weight: normal;
    background: #f0f0f0;
    border-right: 1px solid #000;
    border-bottom: 1px solid #000;
    box-shadow: inset 1px 1px #fff, inset -1px -1px #a0a0a0;
}

.grid td {
    background: #fff;
    border-right: 1px solid #c0c0c0;
    border-bottom: 1px solid #c0c0c0;
}

.grid tr:nth-child(even) td {
    background: #e6f0fc;
}

.grid td.num {
    padding-right: 2px;
    font-size: 12px;
    font-weight: bold;
    text-align: right;
}

.grid tr td.yellow {
    background: #ffff80;
}

.grid tr td.blue {
    background: #cceeff;
}

.grid tr td.mark {
    background: #f0f0f0;
    border-right-color: #000;
    border-bottom-color: #000;
    box-shadow: inset 1px 1px #fff, inset -1px -1px #a0a0a0;
    padding: 0;
}

.mark.current::before {
    content: "";
    display: block;
    width: 6px;
    height: 11px;
    margin-left: 3px;
    background: #000;
    clip-path: polygon(0 0, 100% 50%, 0 100%);
}

/* Tabs */
.tabs {
    display: flex;
    height: 21px;
    border-bottom: 1px solid #dcdcdc;
    flex: none;
}

.tab {
    height: 21px;
    padding: 0 7px;
    background: #fff;
    border-right: 1px solid #dcdcdc;
    text-align: left;
    white-space: nowrap;
}

.main-tabs {
    padding-left: 1px;
}

.main-tabs .tab {
    width: 45px;
}

.detail-tabs {
    background: #fff;
    border-left: 1px solid #dcdcdc;
}

.detail-tabs .tab {
    width: 70px;
}

/* Work area */
.workspace {
    display: flex;
    flex: 1;
    min-height: 0;
}

.dates {
    width: 146px;
    background: #fff;
    border-left: 1px solid #dcdcdc;
    border-right: 4px solid #a0a0a4;
    flex: none;
}

.mover {
    display: flex;
    flex-direction: column;
    gap: 4px;
    width: 30px;
    padding: 3px 0 0 5px;
    flex: none;
}

.mover button {
    width: 18px;
    height: 18px;
    border: 1px solid #adadad;
    background: #e1e1e1;
}

.right {
    flex: 1;
    min-width: 0;
    display: flex;
    flex-direction: column;
}

.rules {
    height: 103px;
    background: #fff;
    overflow: hidden;
    flex: none;
}

.scrollbar {
    display: flex;
    height: 20px;
    border-bottom: 4px solid #a0a0a4;
    flex: none;
}

.scrollbar button {
    width: 17px;
}

.scrollbar svg {
    display: block;
    width: 8px;
    height: 8px;
    margin-left: 4px;
}

.thumb {
    width: 17px;
    height: 15px;
    background: #cdcdcd;
}

/* Rule details */
.details {
    display: flex;
    flex: 1;
    min-height: 0;
    overflow: hidden;
    padding: 2px 0 0 4px;
    border-left: 1px solid #dcdcdc;
}

.conditions, .ranges {
    display: grid;
    align-content: start;
    gap: 2px 0;
    flex: none;
    white-space: nowrap;
}

.conditions {
    grid-template-columns: 112px 217px;
}

.ranges {
    grid-template-columns: 190px 69px 65px;
}

.conditions h2 {
    grid-column: 1 / 3;
    margin: 0;
    height: 13px;
    font-family: "DejaVu Sans", Verdana, sans-serif;
    font-size: 11px;
    line-height: 15px;
}

.details input, .combo {
    height: 17px;
    background: #fff;
}

.details input {
    width: 64px;
    padding-bottom: 3px;
}

.ranges input + input {
    margin-left: 1px;
}

.details input.name {
    width: 154px;
    background: #cceeff;
}

.combo {
    position: relative;
    display: flex;
    width: 63px;
}

.combo.short { width: 75px; }
.combo.medium { width: 117px; }
.combo.group { width: 147px; }
.combo.long { width: 207px; }

.combo select {
    flex: 1;
    min-width: 0;
    appearance: none;
}

.combo::after {
    content: "";
    position: absolute;
    right: 12px;
    top: 7px;
    width: 9px;
    height: 4px;
    background: #000;
    clip-path: polygon(0 0, 100% 0, 50% 100%);
    pointer-events: none;
}

.combo button {
    width: 8px;
    padding-top: 6px;
    color: #505050;
    font-size: 8px;
    line-height: 11px;
    text-align: left;
}

.blank {
    grid-column: 1 / 4;
    height: 17px;
}
```
